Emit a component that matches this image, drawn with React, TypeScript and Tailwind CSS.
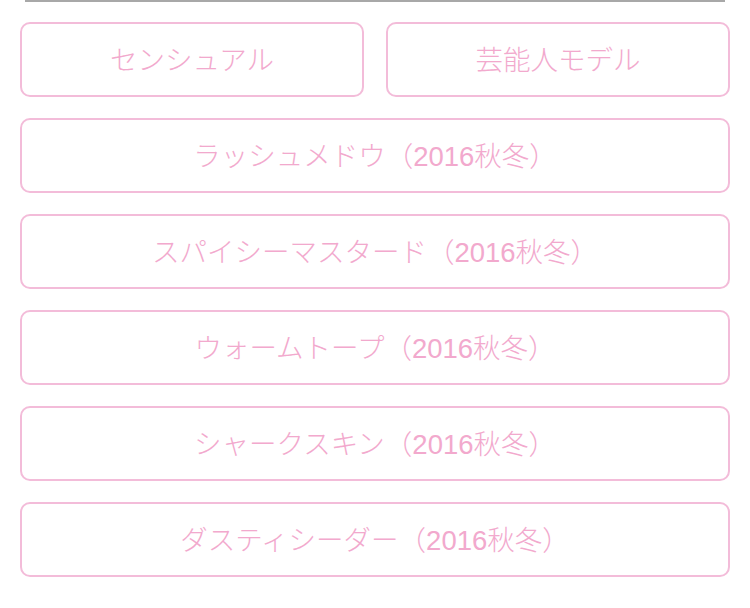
const wide = [
  "ラッシュメドウ（2016秋冬）",
  "スパイシーマスタード（2016秋冬）",
  "ウォームトープ（2016秋冬）",
  "シャークスキン（2016秋冬）",
  "ダスティシーダー（2016秋冬）",
];

function Chip({ label }: { label: string }) {
  return (
    <button className="flex h-[75px] items-center justify-center rounded-[10px] border-2 border-[#f3bcd9] bg-white pt-[3px] text-[27.5px] font-light text-[#f2a9cd]">
      {label}
    </button>
  );
}

export default function App() {
  return (
    <div
      className="h-[608px] w-[750px] overflow-hidden bg-white"
      style={{ fontFamily: '"Liberation Sans", "Noto Sans CJK JP", sans-serif' }}
    >
      <div className="mx-[25px] h-[2px] bg-[#a8a8a8]" />
      <div className="flex flex-col gap-[21px] px-[20px] pt-[20px]">
        <div className="grid grid-cols-2 gap-[22px]">
          <Chip label="センシュアル" />
          <Chip label="芸能人モデル" />
        </div>
        {wide.map((t) => (
          <Chip key={t} label={t} />
        ))}
      </div>
    </div>
  );
}
